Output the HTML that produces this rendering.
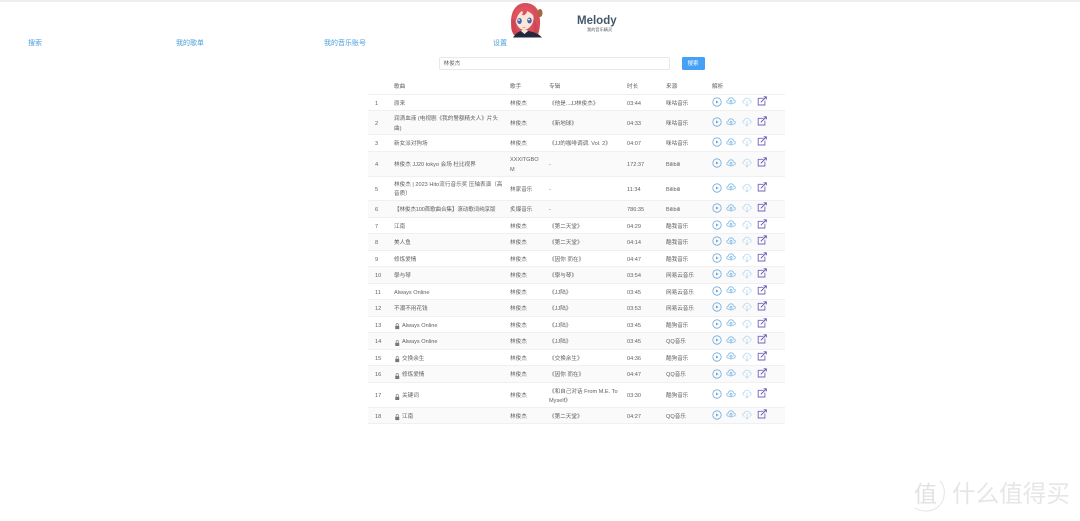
<!DOCTYPE html>
<html lang="zh">
<head>
<meta charset="utf-8">
<title>Melody</title>
<style>
html,body{margin:0;padding:0;background:#fff;}
body{width:1080px;height:521px;overflow:hidden;position:relative;font-family:"Liberation Sans","Noto Sans CJK SC",sans-serif;color:#5f5f5f;font-size:5.6px;}
#page{position:absolute;left:0;top:0;width:1080px;height:521px;filter:blur(.3px);}
.abs{position:absolute;}
.nav{position:absolute;top:39px;font-size:7px;line-height:9px;color:#4a9fdc;white-space:nowrap;}
.r{position:absolute;left:368px;width:417px;border-bottom:1px solid #eef0f3;box-sizing:border-box;}
.s{background:#fafafa;}
.c{position:absolute;top:4px;bottom:0;display:flex;align-items:center;line-height:9.200px;}
.h .c{top:1.500px;}
.n{left:7px;width:16px;}
.t{left:26px;width:105px;}
.a{left:142px;width:32px;word-break:break-all;}
.b{left:181px;width:72px;}
.d{left:259px;width:30px;}
.f{left:298px;width:40px;}
.lock{width:4.500px;height:6.500px;margin-left:1px;margin-right:2.500px;flex:none;}
.i{position:absolute;top:50%;width:10px;height:10px;margin-top:-5.500px;}
.i1{left:343.500px;opacity:.9}.i2{left:358px;margin-top:-6px;opacity:.9}.i3{left:374px;opacity:.9}.i4{left:389px;margin-top:-6.500px}
</style>
</head>
<body>
<svg width="0" height="0" style="position:absolute">
<defs>
<symbol id="p" viewBox="0 0 10 10"><circle cx="5" cy="5" r="4.200" fill="none" stroke="#5f9fd8" stroke-width=".8"/><path d="M4 3.400 6.600 5 4 6.600z" fill="#5f9fd8"/></symbol>
<symbol id="u" viewBox="0 0 10 10"><path d="M2.600 7.200C1.200 7.200.6 6.200.8 5.300 1 4.500 1.700 4.100 2.300 4.100 2.600 2.600 3.700 1.800 5 1.800s2.400.8 2.700 2.300C8.400 4.100 9.200 4.600 9.300 5.400 9.400 6.300 8.700 7.200 7.500 7.200z" fill="none" stroke="#72b4e4" stroke-width=".8"/><path d="M5 8.800V4.300M3.500 5.600 5 4.200 6.500 5.600" fill="none" stroke="#72b4e4" stroke-width=".8"/></symbol>
<symbol id="v" viewBox="0 0 10 10"><path d="M2.600 6.400C1.300 6.300.7 5.400.8 4.500 1 3.700 1.700 3.300 2.300 3.300 2.600 1.900 3.700 1.100 5 1.100s2.400.8 2.700 2.200C8.400 3.300 9.100 3.800 9.200 4.500 9.300 5.400 8.700 6.300 7.400 6.400" fill="none" stroke="#b5d6ee" stroke-width=".8"/><path d="M5 3.600V9M3.500 7.400 5 9 6.500 7.400" fill="none" stroke="#b5d6ee" stroke-width=".8"/></symbol>
<symbol id="e" viewBox="0 0 10 10"><path d="M6.500 2.300H1.200V9H7.900V4.600" fill="none" stroke="#6f66b8" stroke-width=".9"/><path d="M3.800 6.300 9 1.200M6.600.8H9.300V3.400" fill="none" stroke="#5b50ad" stroke-width=".9"/></symbol>
<symbol id="l" viewBox="0 0 5 7"><path d="M1.200 3V1.800C1.200.9 1.800.4 2.500.4S3.800.9 3.800 1.800V3" fill="none" stroke="#777" stroke-width=".7"/><rect x=".3" y="2.900" width="4.400" height="3.800" rx=".4" fill="#777"/></symbol>
</defs>
</svg>
<div id="page">
<div class="abs" style="left:0;top:0;width:1080px;height:1.500px;background:#eeeeee"></div>

<svg class="abs" style="left:509px;top:2px" width="35" height="36" viewBox="0 0 35 36">
<path d="M5 33C2 26 1 19 3 12 5 5 10 1 16 1 23 1 29 5 30 12 32 20 31 27 29 33z" fill="#d5505c"/>
<ellipse cx="31" cy="11" rx="2.500" ry="4" fill="#a8663e"/>
<path d="M6 14C8 8 12 7 15 8 20 9 24 11 24.500 15 25 21 21 27 15.500 28 9.500 28 6 21 6 14z" fill="#fbe6da"/>
<path d="M4 16C5 8 10 4 16 5 22 5 26 10 26 15 23 12 21 10 18 9 18 12 15 14 13 13 14 11 14 10 13 9 10 11 8 14 7 19 6 18 5 17 4 16z" fill="#e0525e"/>
<ellipse cx="10.500" cy="19" rx="2.300" ry="3" fill="#4a63a8"/>
<ellipse cx="20.500" cy="18.500" rx="2.300" ry="3" fill="#4a63a8"/>
<circle cx="10" cy="18" r=".9" fill="#fff"/><circle cx="20" cy="17.500" r=".9" fill="#fff"/>
<path d="M13.500 25.500h3" stroke="#c77" stroke-width=".6"/>
<path d="M4 17C1 23 2 29 5 33L9 33C7 28 6 23 6 18zM25 17C29 24 29 29 28 33L23 33C25 28 25.500 23 25 18z" fill="#cf4551"/>
<path d="M4 35.500C7 31 10 29.500 12 29L15.500 32 19 29C23 29.500 29 31 33 35.500z" fill="#23283c"/>
<path d="M12 29 15.500 32 19 29 18 28H13z" fill="#f3e3da"/>
</svg>

<div class="abs" style="left:577px;top:14px;font-size:11.500px;line-height:14px;font-weight:bold;color:#34495e;opacity:.92;white-space:nowrap">Melody</div>
<div class="abs" style="left:587px;top:27px;font-size:4.200px;line-height:6px;color:#555;white-space:nowrap">我的音乐精灵</div>

<div class="nav" style="left:28px">搜索</div>
<div class="nav" style="left:176px">我的歌单</div>
<div class="nav" style="left:324px">我的音乐账号</div>
<div class="nav" style="left:493px">设置</div>

<div class="abs" style="left:438.500px;top:57px;width:231px;height:13px;box-sizing:border-box;border:1px solid #e6e8ec;border-radius:2px;line-height:13px;padding-left:4px;font-size:5.600px;color:#666">林俊杰</div>
<div class="abs" style="left:681.500px;top:57px;width:23px;height:13px;border-radius:1.500px;background:#46a0f5;color:#fff;font-size:5.500px;line-height:14px;text-align:center">搜索</div>

<div class="r h" style="top:80px;height:14.500px"><span class="c t">歌曲</span><span class="c a">歌手</span><span class="c b">专辑</span><span class="c d">时长</span><span class="c f">来源</span><span class="c" style="left:344px">解析</span></div>

<div class="r" style="top:94.500px;height:16.500px"><span class="c n">1</span><span class="c t">原来</span><span class="c a">林俊杰</span><span class="c b">《他是...JJ林俊杰》</span><span class="c d">03:44</span><span class="c f">咪咕音乐</span><svg class="i i1"><use href="#p"/></svg><svg class="i i2"><use href="#u"/></svg><svg class="i i3"><use href="#v"/></svg><svg class="i i4"><use href="#e"/></svg></div>

<div class="r s" style="top:111px;height:24px"><span class="c n">2</span><span class="c t">润滴血液 (电视剧《我的警额精夫人》片头曲)</span><span class="c a">林俊杰</span><span class="c b">《新地球》</span><span class="c d">04:33</span><span class="c f">咪咕音乐</span><svg class="i i1"><use href="#p"/></svg><svg class="i i2"><use href="#u"/></svg><svg class="i i3"><use href="#v"/></svg><svg class="i i4"><use href="#e"/></svg></div>

<div class="r" style="top:135px;height:16.500px"><span class="c n">3</span><span class="c t">新女派对狗场</span><span class="c a">林俊杰</span><span class="c b">《JJ的咖啡调调. Vol. 2》</span><span class="c d">04:07</span><span class="c f">咪咕音乐</span><svg class="i i1"><use href="#p"/></svg><svg class="i i2"><use href="#u"/></svg><svg class="i i3"><use href="#v"/></svg><svg class="i i4"><use href="#e"/></svg></div>

<div class="r s" style="top:151.500px;height:25px"><span class="c n">4</span><span class="c t">林俊杰 JJ20 tokyo 会场 杜比视界</span><span class="c a">XXXITGBOM</span><span class="c b">-</span><span class="c d">172:37</span><span class="c f">Bilibili</span><svg class="i i1"><use href="#p"/></svg><svg class="i i2"><use href="#u"/></svg><svg class="i i3"><use href="#v"/></svg><svg class="i i4"><use href="#e"/></svg></div>

<div class="r" style="top:176.500px;height:24.500px"><span class="c n">5</span><span class="c t" style="width:109px">林俊杰 | 2023 Hito流行音乐奖 压轴表演（高音质）</span><span class="c a">林家音乐</span><span class="c b">-</span><span class="c d">11:34</span><span class="c f">Bilibili</span><svg class="i i1"><use href="#p"/></svg><svg class="i i2"><use href="#u"/></svg><svg class="i i3"><use href="#v"/></svg><svg class="i i4"><use href="#e"/></svg></div>

<div class="r s" style="top:201px;height:16.500px"><span class="c n">6</span><span class="c t" style="width:112px;white-space:nowrap;letter-spacing:-.15px">【林俊杰100首歌曲合集】滚动歌词纯享版</span><span class="c a">炙爆音乐</span><span class="c b">-</span><span class="c d">786:35</span><span class="c f">Bilibili</span><svg class="i i1"><use href="#p"/></svg><svg class="i i2"><use href="#u"/></svg><svg class="i i3"><use href="#v"/></svg><svg class="i i4"><use href="#e"/></svg></div>

<div class="r" style="top:217.500px;height:16.500px"><span class="c n">7</span><span class="c t">江南</span><span class="c a">林俊杰</span><span class="c b">《第二天堂》</span><span class="c d">04:29</span><span class="c f">酷我音乐</span><svg class="i i1"><use href="#p"/></svg><svg class="i i2"><use href="#u"/></svg><svg class="i i3"><use href="#v"/></svg><svg class="i i4"><use href="#e"/></svg></div>

<div class="r s" style="top:234px;height:16.500px"><span class="c n">8</span><span class="c t">美人鱼</span><span class="c a">林俊杰</span><span class="c b">《第二天堂》</span><span class="c d">04:14</span><span class="c f">酷我音乐</span><svg class="i i1"><use href="#p"/></svg><svg class="i i2"><use href="#u"/></svg><svg class="i i3"><use href="#v"/></svg><svg class="i i4"><use href="#e"/></svg></div>

<div class="r" style="top:250.500px;height:16.500px"><span class="c n">9</span><span class="c t">修炼爱情</span><span class="c a">林俊杰</span><span class="c b">《因你 而在》</span><span class="c d">04:47</span><span class="c f">酷我音乐</span><svg class="i i1"><use href="#p"/></svg><svg class="i i2"><use href="#u"/></svg><svg class="i i3"><use href="#v"/></svg><svg class="i i4"><use href="#e"/></svg></div>

<div class="r s" style="top:267px;height:16.500px"><span class="c n">10</span><span class="c t">學与琴</span><span class="c a">林俊杰</span><span class="c b">《學与琴》</span><span class="c d">03:54</span><span class="c f">网易云音乐</span><svg class="i i1"><use href="#p"/></svg><svg class="i i2"><use href="#u"/></svg><svg class="i i3"><use href="#v"/></svg><svg class="i i4"><use href="#e"/></svg></div>

<div class="r" style="top:283.500px;height:16.500px"><span class="c n">11</span><span class="c t">Always Online</span><span class="c a">林俊杰</span><span class="c b">《JJ陆》</span><span class="c d">03:45</span><span class="c f">网易云音乐</span><svg class="i i1"><use href="#p"/></svg><svg class="i i2"><use href="#u"/></svg><svg class="i i3"><use href="#v"/></svg><svg class="i i4"><use href="#e"/></svg></div>

<div class="r s" style="top:300px;height:16.500px"><span class="c n">12</span><span class="c t">不潮不用花钱</span><span class="c a">林俊杰</span><span class="c b">《JJ陆》</span><span class="c d">03:53</span><span class="c f">网易云音乐</span><svg class="i i1"><use href="#p"/></svg><svg class="i i2"><use href="#u"/></svg><svg class="i i3"><use href="#v"/></svg><svg class="i i4"><use href="#e"/></svg></div>

<div class="r" style="top:316.500px;height:16.500px"><span class="c n">13</span><span class="c t"><svg class="lock"><use href="#l"/></svg>Always Online</span><span class="c a">林俊杰</span><span class="c b">《JJ陆》</span><span class="c d">03:45</span><span class="c f">酷狗音乐</span><svg class="i i1"><use href="#p"/></svg><svg class="i i2"><use href="#u"/></svg><svg class="i i3"><use href="#v"/></svg><svg class="i i4"><use href="#e"/></svg></div>

<div class="r s" style="top:333px;height:16.500px"><span class="c n">14</span><span class="c t"><svg class="lock"><use href="#l"/></svg>Always Online</span><span class="c a">林俊杰</span><span class="c b">《JJ陆》</span><span class="c d">03:45</span><span class="c f">QQ音乐</span><svg class="i i1"><use href="#p"/></svg><svg class="i i2"><use href="#u"/></svg><svg class="i i3"><use href="#v"/></svg><svg class="i i4"><use href="#e"/></svg></div>

<div class="r" style="top:349.500px;height:16.500px"><span class="c n">15</span><span class="c t"><svg class="lock"><use href="#l"/></svg>交换余生</span><span class="c a">林俊杰</span><span class="c b">《交换余生》</span><span class="c d">04:36</span><span class="c f">酷狗音乐</span><svg class="i i1"><use href="#p"/></svg><svg class="i i2"><use href="#u"/></svg><svg class="i i3"><use href="#v"/></svg><svg class="i i4"><use href="#e"/></svg></div>

<div class="r s" style="top:366px;height:17px"><span class="c n">16</span><span class="c t"><svg class="lock"><use href="#l"/></svg>修炼爱情</span><span class="c a">林俊杰</span><span class="c b">《因你 而在》</span><span class="c d">04:47</span><span class="c f">QQ音乐</span><svg class="i i1"><use href="#p"/></svg><svg class="i i2"><use href="#u"/></svg><svg class="i i3"><use href="#v"/></svg><svg class="i i4"><use href="#e"/></svg></div>

<div class="r" style="top:383px;height:24.500px"><span class="c n">17</span><span class="c t"><svg class="lock"><use href="#l"/></svg>关键词</span><span class="c a">林俊杰</span><span class="c b">《和自己对话 From M.E. To Myself》</span><span class="c d">03:30</span><span class="c f">酷狗音乐</span><svg class="i i1"><use href="#p"/></svg><svg class="i i2"><use href="#u"/></svg><svg class="i i3"><use href="#v"/></svg><svg class="i i4"><use href="#e"/></svg></div>

<div class="r s" style="top:407.500px;height:16.500px"><span class="c n">18</span><span class="c t"><svg class="lock"><use href="#l"/></svg>江南</span><span class="c a">林俊杰</span><span class="c b">《第二天堂》</span><span class="c d">04:27</span><span class="c f">QQ音乐</span><svg class="i i1"><use href="#p"/></svg><svg class="i i2"><use href="#u"/></svg><svg class="i i3"><use href="#v"/></svg><svg class="i i4"><use href="#e"/></svg></div>

<div class="abs" style="left:914px;top:480px;font-size:23px;line-height:28px;color:#e2e2e2;white-space:nowrap">值</div>
<svg class="abs" style="left:912px;top:478px" width="34" height="36" viewBox="0 0 34 36"><path d="M28 3C32 7 33 12 32 18 31 26 24 33 14 33 10 33 6 32 3 30" fill="none" stroke="#e4e4e4" stroke-width="1"/></svg>
<div class="abs" style="left:952px;top:480px;font-size:23.600px;line-height:30px;color:#e6e6e6;white-space:nowrap">什么值得买</div>
</div>
</body>
</html>
